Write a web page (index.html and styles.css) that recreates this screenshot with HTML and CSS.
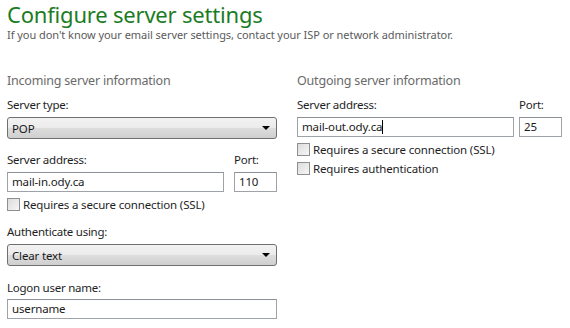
FILE: index.html
```html
<!DOCTYPE html>
<html lang="en">
<head>
    <meta charset="UTF-8">
    <title>Configure server settings</title>
    <link rel="stylesheet" href="styles.css">
</head>
<body>

    <div class="page">
        <h1>Configure server settings</h1>
        <p class="intro">If you don't know your email server settings, contact your ISP or network administrator.</p>

        <div class="columns">
            <!-- Incoming -->
            <div class="col col-in">
                <h2>Incoming server information</h2>

                <label class="lbl">Server type:</label>
                <div class="select"><span>POP</span><span class="arrow"></span></div>

                <div class="pair pair-in">
                    <div class="grow">
                        <label class="lbl">Server address:</label>
                        <div class="field">mail-in.ody.ca</div>
                    </div>
                    <div class="port">
                        <label class="lbl">Port:</label>
                        <div class="field">110</div>
                    </div>
                </div>
                <div class="check"><span class="box"></span>Requires a secure connection (SSL)</div>

                <label class="lbl auth-lbl">Authenticate using:</label>
                <div class="select"><span>Clear text</span><span class="arrow"></span></div>

                <label class="lbl logon-lbl">Logon user name:</label>
                <div class="field">username</div>
            </div>

            <!-- Outgoing -->
            <div class="col col-out">
                <h2>Outgoing server information</h2>

                <div class="pair pair-out">
                    <div class="grow">
                        <label class="lbl">Server address:</label>
                        <div class="field">mail-out.ody.ca<span class="caret"></span></div>
                    </div>
                    <div class="port">
                        <label class="lbl">Port:</label>
                        <div class="field">25</div>
                    </div>
                </div>
                <div class="check"><span class="box"></span>Requires a secure connection (SSL)</div>
                <div class="check"><span class="box"></span>Requires authentication</div>
            </div>
        </div>
    </div>

</body>
</html>
```

FILE: styles.css
```css
/* Base */
body {
    margin: 0;
    background-color: #ffffff;
    font-family: 'Noto Sans', 'Open Sans', sans-serif;
    font-size: 11.5px;
    letter-spacing: -0.15px;
    color: #1e1e1e;
}

.page {
    padding: 1px 7px 0;
}

h1 {
    margin: 0;
    font-size: 22px;
    font-weight: 400;
    letter-spacing: -0.2px;
    line-height: 27px;
    color: #1b7c1f;
}

.intro {
    margin: 0;
    font-size: 11px;
    letter-spacing: -0.05px;
    line-height: 13px;
    color: #5b5b5b;
}

/* Two columns */
.columns {
    display: flex;
    gap: 20px;
    margin-top: 31px;
}

.col-in {
    width: 270px;
}

.col-out {
    width: 265px;
}

h2 {
    margin: 0 0 7px;
    font-size: 12.5px;
    font-weight: 400;
    letter-spacing: -0.2px;
    line-height: 18px;
    color: #6a6a6a;
}

.lbl {
    display: block;
    line-height: 16px;
    margin-bottom: 4px;
    letter-spacing: -0.25px;
}

.pair-in {
    margin-top: 13px;
}

.auth-lbl {
    margin-top: 10px;
}

.logon-lbl {
    margin-top: 14px;
    margin-bottom: 3px;
}

/* Inputs */
.field {
    box-sizing: border-box;
    height: 20px;
    border: 1px solid #9ea3aa;
    border-top-color: #8c9099;
    padding: 0 4px;
    line-height: 18px;
    color: #1a1a1a;
    background: #fff;
}

.caret {
    display: inline-block;
    width: 1px;
    height: 14px;
    background: #000;
    vertical-align: -3px;
}

.pair {
    display: flex;
}

.pair-in {
    gap: 10px;
}

.pair-out {
    gap: 5px;
}

.grow {
    flex: 1;
}

.port {
    width: 43px;
}

/* Drop-downs */
.select {
    box-sizing: border-box;
    height: 22px;
    display: flex;
    align-items: center;
    justify-content: space-between;
    padding: 0 6px 0 4px;
    border: 1px solid #707070;
    border-radius: 3px;
    background: linear-gradient(#f2f2f2 0%, #ebebeb 50%, #dddddd 51%, #cfcfcf 100%);
    color: #1a1a1a;
}

.arrow {
    width: 0;
    height: 0;
    border-left: 4px solid transparent;
    border-right: 4px solid transparent;
    border-top: 4px solid #000;
}

/* Checkboxes */
.check {
    display: flex;
    align-items: center;
    gap: 3px;
    height: 19px;
    margin-top: 3px;
}

.check + .check {
    margin-top: 0;
}

.box {
    box-sizing: border-box;
    width: 13px;
    height: 13px;
    border: 1px solid #8e8f8f;
    background: linear-gradient(135deg, #dcdcdc, #f6f6f6);
}
```
